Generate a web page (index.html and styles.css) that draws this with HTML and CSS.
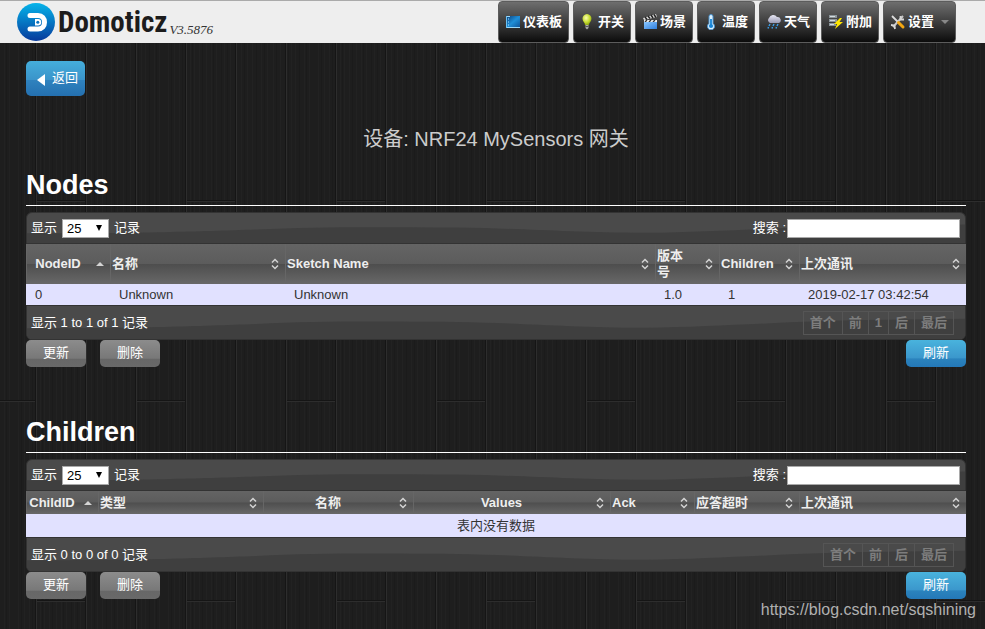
FILE: index.html
```html
<!DOCTYPE html>
<html lang="zh-CN">
<head>
<meta charset="utf-8">
<title>Domoticz</title>
<link rel="stylesheet" href="styles.css">
</head>
<body>
<svg class="defs" width="0" height="0" aria-hidden="true">
  <defs>
    <linearGradient id="disc" x1="0" y1="0" x2="0" y2="1"><stop offset="0" stop-color="#05b4ea"/><stop offset="1" stop-color="#073a9c"/></linearGradient>
    <linearGradient id="screen" x1="0" y1="0" x2="1" y2="1"><stop offset="0" stop-color="#0a3c78"/><stop offset=".5" stop-color="#1f8fd8"/><stop offset="1" stop-color="#0c4f96"/></linearGradient>
    <radialGradient id="bulb" cx=".4" cy=".35" r=".7"><stop offset="0" stop-color="#fbffb0"/><stop offset=".6" stop-color="#c3d92c"/><stop offset="1" stop-color="#7f9812"/></radialGradient>
    <linearGradient id="clap" x1="0" y1="0" x2="1" y2="1"><stop offset="0" stop-color="#8cc8ff"/><stop offset="1" stop-color="#2f7fe0"/></linearGradient>
    <linearGradient id="cloud" x1="0" y1="0" x2="0" y2="1"><stop offset="0" stop-color="#e8e8f4"/><stop offset="1" stop-color="#9a9ab4"/></linearGradient>
    <symbol id="wave" viewBox="0 0 940 31" preserveAspectRatio="none"><path d="M0 21C120 21 170 19 230 17C290 14 350 14.500 430 15C500 16 540 20 620 20.500C700 19.500 760 14 860 13L940 12V31H0Z" fill="#3f3f3f"/></symbol>
    <symbol id="both" viewBox="0 0 8 12"><path d="M1 4.500L4 1.500L7 4.500M1 7.500L4 10.500L7 7.500" fill="none" stroke="#d4d4d4" stroke-width="1.500"/></symbol>
    <symbol id="up" viewBox="0 0 8 12"><path d="M0 8L4 4L8 8Z" fill="#d4d4d4"/></symbol>
  </defs>
</svg>
<header class="topbar">
  <a class="brand" href="#">
    <svg class="logo" viewBox="0 0 38 38" aria-hidden="true"><circle cx="19" cy="19" r="19" fill="url(#disc)"/><path d="M13 12.500H21C25.200 12.500 27.500 15.200 27.500 19.200S25.200 26 21 26H13" fill="none" stroke="#fff" stroke-width="5" stroke-linecap="round"/><path d="M18 16H21A3.200 3.200 0 0 1 21 22.400H18Z" fill="#fff"/><circle cx="20.800" cy="19.200" r="1.500" fill="#0872bf"/></svg>
    <span class="name">Domoticz</span><span class="version">V3.5876</span>
  </a>
  <nav class="menu">
    <a href="#"><svg viewBox="0 0 16 16"><path d="M1 2H15V14H1Z" fill="url(#screen)"/><path d="M1 2.500H5M1 13.500H15" stroke="#9cd8fa"/><path d="M1.500 2V14" stroke="#6cc1f2"/><path d="M3 5H4M3 8H4M3 11H4" stroke="#b5e6ff"/></svg>仪表板</a>
    <a href="#"><svg viewBox="0 0 16 16"><path d="M7 0A4.600 4.600 0 0 0 2.500 4.800C2.500 7.500 5 8.500 5 11H9C9 8.500 11.500 7.500 11.500 4.800A4.600 4.600 0 0 0 7 0Z" fill="url(#bulb)"/><path d="M5.500 11H8.500V14L7 15.500L5.500 14Z" fill="#a9a9a9"/><path d="M5.500 12.500H8.500" stroke="#555"/></svg>开关</a>
    <a href="#"><svg viewBox="0 0 16 16"><path d="M1 4L14 0L15 3L2 6Z" fill="#ddd"/><path d="M3 3L5 5.500M6 2L8 4.500M9 1L11 4M12 .5L14 3.500" stroke="#222" stroke-width="1.500"/><path d="M2 6H15V8H2Z" fill="#eee"/><path d="M3 8L5 6M7 8L9 6M11 8L13 6" stroke="#333" stroke-width="1.300"/><path d="M2 8H15V15H2Z" fill="url(#clap)"/></svg>场景</a>
    <a href="#"><svg viewBox="0 0 16 16"><path d="M5 2.500A2 2 0 0 1 9 2.500V9.500A3.500 3.500 0 1 1 5 9.500Z" fill="#d9f0ff" stroke="#4b93cf"/><circle cx="7" cy="12" r="2.100" fill="#1785d8"/><path d="M7 5V12" stroke="#1785d8" stroke-width="1.800"/></svg>温度</a>
    <a href="#"><svg viewBox="0 0 16 16"><path d="M4 9A3 3 0 0 1 3 4A4.500 4.500 0 0 1 11 3A3.200 3.200 0 0 1 13 9Z" fill="url(#cloud)"/><path d="M4 10L3 12M8 10L7 12M12 10L11 12M2.500 13L2 14.500M6.500 13L6 14.500M10.500 13L10 14.500" stroke="#3b9de8" stroke-width="1.400"/></svg>天气</a>
    <a href="#"><svg viewBox="0 0 16 16"><path d="M1 1H9V4H1ZM1 5H9V8H1ZM1 9H8V12H1Z" fill="#8b9499"/><path d="M2 2.500H7M2 6.500H7M2 10.500H6" stroke="#d3dade"/><path d="M12 4L6 10H9L7 15L15 8H11.500L14 4Z" fill="#ffe600"/></svg>附加</a>
    <a href="#"><svg viewBox="0 0 16 16"><path d="M13 2L3 13" stroke="#c8c8c8" stroke-width="2"/><path d="M2 2L8 8" stroke="#ddd" stroke-width="1.800"/><path d="M8.500 8.500L13 13" stroke="#f3a712" stroke-width="3" stroke-linecap="round"/><path d="M10.500 2L10.500 5.500H14M1 11L4.500 11.500L5 15" fill="none" stroke="#d6d6d6" stroke-width="1.800"/></svg>设置<i class="caret"></i></a>
  </nav>
</header>
<main class="page">
  <button class="btn blue back" type="button"><i class="arrow"></i>返回</button>
  <h1>设备: NRF24 MySensors 网关</h1>

  <section>
    <h2>Nodes</h2>
    <div class="grid">
      <div class="bar top">
        <svg class="wave" aria-hidden="true"><use href="#wave"/></svg>
        <label class="length">显示 <span class="pick"><select><option>25</option></select></span> 记录</label>
        <label class="search">搜索 :<input type="text"></label>
      </div>
      <table class="nodes">
        <colgroup><col class="w84"><col class="w175"><col><col class="w64"><col class="w80"><col class="w167"></colgroup>
        <thead><tr>
          <th class="mid">NodeID<svg><use href="#up"/></svg></th>
          <th>名称<svg><use href="#both"/></svg></th>
          <th>Sketch Name<svg><use href="#both"/></svg></th>
          <th>版本号<svg><use href="#both"/></svg></th>
          <th>Children<svg><use href="#both"/></svg></th>
          <th>上次通讯<svg><use href="#both"/></svg></th>
        </tr></thead>
        <tbody><tr><td>0</td><td>Unknown</td><td>Unknown</td><td>1.0</td><td>1</td><td>2019-02-17 03:42:54</td></tr></tbody>
      </table>
      <div class="bar bottom">
        <svg class="wave" aria-hidden="true"><use href="#wave"/></svg>
        <span>显示 1 to 1 of 1 记录</span>
        <div class="pager"><a href="#">首个</a><a href="#">前</a><a href="#">1</a><a href="#">后</a><a href="#">最后</a></div>
      </div>
    </div>
    <div class="actions"><button class="btn grey" type="button">更新</button><button class="btn grey" type="button">删除</button><button class="btn blue refresh" type="button">刷新</button></div>
  </section>

  <section>
    <h2>Children</h2>
    <div class="grid">
      <div class="bar top">
        <svg class="wave" aria-hidden="true"><use href="#wave"/></svg>
        <label class="length">显示 <span class="pick"><select><option>25</option></select></span> 记录</label>
        <label class="search">搜索 :<input type="text"></label>
      </div>
      <table class="children">
        <colgroup><col class="w72"><col class="w165"><col class="w150"><col><col class="w84"><col class="w105"><col class="w167"></colgroup>
        <thead><tr>
          <th class="mid">ChildID<svg><use href="#up"/></svg></th>
          <th>类型<svg><use href="#both"/></svg></th>
          <th class="mid">名称<svg><use href="#both"/></svg></th>
          <th class="mid">Values<svg><use href="#both"/></svg></th>
          <th>Ack<svg><use href="#both"/></svg></th>
          <th>应答超时<svg><use href="#both"/></svg></th>
          <th>上次通讯<svg><use href="#both"/></svg></th>
        </tr></thead>
        <tbody><tr><td class="empty" colspan="7">表内没有数据</td></tr></tbody>
      </table>
      <div class="bar bottom">
        <svg class="wave" aria-hidden="true"><use href="#wave"/></svg>
        <span>显示 0 to 0 of 0 记录</span>
        <div class="pager"><a href="#">首个</a><a href="#">前</a><a href="#">后</a><a href="#">最后</a></div>
      </div>
    </div>
    <div class="actions"><button class="btn grey" type="button">更新</button><button class="btn grey" type="button">删除</button><button class="btn blue refresh" type="button">刷新</button></div>
  </section>
</main>
<div class="watermark">https://blog.csdn.net/sqshining</div>
</body>
</html>
```
FILE: styles.css
```css
* { box-sizing: border-box; }

body {
  margin: 0;
  min-height: 100vh;
  color: #fff;
  font: 13px/18px "Liberation Sans", "Noto Sans CJK SC", sans-serif;
  background-color: #1e1e1e;
  /* dark planks with fine grain */
  background-image: url("data:image/svg+xml,%3Csvg xmlns='http://www.w3.org/2000/svg' width='150' height='400' shape-rendering='crispEdges'%3E%3Cpath fill='none' stroke='%23222222' d='M5.5 0V400M9.500 0V400M14.500 0V400M21.500 0V400M26.500 0V400M31.500 0V400M39.500 0V400M45.500 0V400M56.500 0V400M62.500 0V400M67.500 0V400M76.500 0V400M82.500 0V400M88.500 0V400M95.500 0V400M106.500 0V400M110.500 0V400M119.500 0V400M124.500 0V400M133.500 0V400M139.500 0V400M144.500 0V400'/%3E%3Cpath fill='none' stroke='%231b1b1b' d='M7.500 0V400M17.500 0V400M28.500 0V400M36.500 0V400M42.500 0V400M59.500 0V400M71.500 0V400M79.500 0V400M91.500 0V400M103.500 0V400M114.500 0V400M121.500 0V400M136.500 0V400M147.500 0V400'/%3E%3Cpath fill='none' stroke='%23151515' d='M.5 0V400M50.500 0V400M100.500 0V400M1 200.500H50M101 .5H150'/%3E%3Cpath fill='none' stroke='%232d2d2d' d='M1.500 0V400M51.500 0V400M101.500 0V400M1 201.500H50M101 1.500H150'/%3E%3C/svg%3E");
  background-position: 35px 0;
}

.defs { position: absolute; }
a { color: inherit; text-decoration: none; }

.topbar {
  display: flex;
  justify-content: space-between;
  height: 43px;
  padding: 0 29px 0 17px;
  border-top: 1px solid #aaa;
  background: #eee;
}
.brand { display: flex; align-items: center; color: #1c1c1c; }
.logo { width: 38px; height: 38px; margin-right: 3px; }
.name { font: bold 29px/42px "Roboto Condensed", "Open Sans Condensed", "Noto Sans CJK SC", sans-serif; }
.version { align-self: flex-end; margin-left: 2px; font: italic 13px/26px "Liberation Serif", serif; color: #333; }

.menu { display: flex; gap: 4px; }
.menu a {
  display: flex;
  align-items: center;
  padding: 0 6px;
  border: 1px solid #5c5c5c;
  border-radius: 4px;
  background: linear-gradient(#6e6e6e, #0c0c0c);
  font-weight: bold;
}
.menu svg { width: 16px; height: 16px; margin-right: 2px; }
.caret { margin-left: 7px; border: 4px solid transparent; border-top-color: #888; border-bottom: 0; }

.page { padding: 18px 19px 0 26px; }

.btn {
  height: 27px;
  padding: 0 17px 2px;
  border: 0;
  border-radius: 5px;
  color: #fff;
  font: inherit;
}
.grey { background: linear-gradient(#8c8c8c, #787878 68%, #676767 70%, #696969); }
.blue { background: linear-gradient(#49b3dd, #3b97cc 66%, #2b83bd 70%, #2478b8); }
.back { display: flex; align-items: center; height: 35px; padding: 0 7px 2px 11px; background: linear-gradient(#45aedb, #3a94ca 53%, #2f82be 55%, #2470b0); }
.arrow { margin: 4px 7px 0 0; border: 6px solid transparent; border-right: 8px solid #fff; border-left: 0; }

h1 { margin: 29px 0 16px; font-size: 20px; line-height: 28px; font-weight: normal; text-align: center; color: #ccc; }
h2 { margin: 0 0 6px; padding-bottom: 4px; border-bottom: 1px solid #fff; font-size: 27px; line-height: 32px; }
.actions { display: flex; gap: 14px; margin-bottom: 49px; }
.refresh { margin-left: auto; }

.bar {
  position: relative;
  display: flex;
  align-items: center;
  justify-content: space-between;
  padding: 0 5px 0 4px;
  overflow: hidden;
  border: 1px solid #333;
  background: #4a4a4a;
}
.bar > * { position: relative; }
.bar > .wave { position: absolute; inset: 0; width: 100%; height: 100%; }
.top { height: 32px; border-radius: 6px 6px 0 0; }
.bottom { height: 35px; border-radius: 0 0 6px 6px; }
.length, .search { display: flex; align-items: center; }
.length { gap: 5px; }
.pick { position: relative; margin-top: 1px; }
.pick::after { content: ""; position: absolute; right: 7px; top: 6px; border: 3px solid transparent; border-top: 6px solid #000; border-bottom: 0; pointer-events: none; }
select { display: block; width: 47px; height: 19px; padding: 0 4px; appearance: none; border: 1px solid #a9a9a9; border-radius: 0; background: #fff; color: #000; font: 13px/17px "Liberation Sans", sans-serif; }
.search input { width: 173px; height: 19px; margin: 1px 0 0 1px; border: 1px solid #a9a9a9; background: #fff; }

table { width: 100%; table-layout: fixed; border-collapse: collapse; }
th {
  position: relative;
  height: 40px;
  padding: 0 24px 0 2px;
  background: linear-gradient(#646464, #5c5c5c 49%, #4e4e4e 51%, #686868);
  box-shadow: inset 1px 0 #666;
  color: #eee;
  line-height: 16px;
  text-align: left;
}
.mid { text-align: center; padding: 0 20px 0 0; }
.children th { height: 23px; white-space: nowrap; }
th svg { position: absolute; right: 6px; top: 50%; width: 8px; height: 12px; margin-top: -6px; }
td { height: 21px; padding: 0 9px; background: #e1e1ff; color: #333; }
.children td { height: 23px; text-align: center; }
.w64 { width: 64px; }
.w72 { width: 72px; }
.w80 { width: 80px; }
.w84 { width: 84px; }
.w105 { width: 105px; }
.w150 { width: 150px; }
.w165 { width: 165px; }
.w167 { width: 167px; }
.w175 { width: 175px; }

.pager { display: flex; margin-right: 6px; border-left: 1px solid #555; font-weight: bold; color: #7d7d7d; }
.pager a { padding: 2px 6px; border: 1px solid #555; border-left: 0; }

.watermark { position: absolute; right: 9px; top: 600px; font: 16px/20px "Liberation Sans", sans-serif; color: #b0b0b0; }
```
